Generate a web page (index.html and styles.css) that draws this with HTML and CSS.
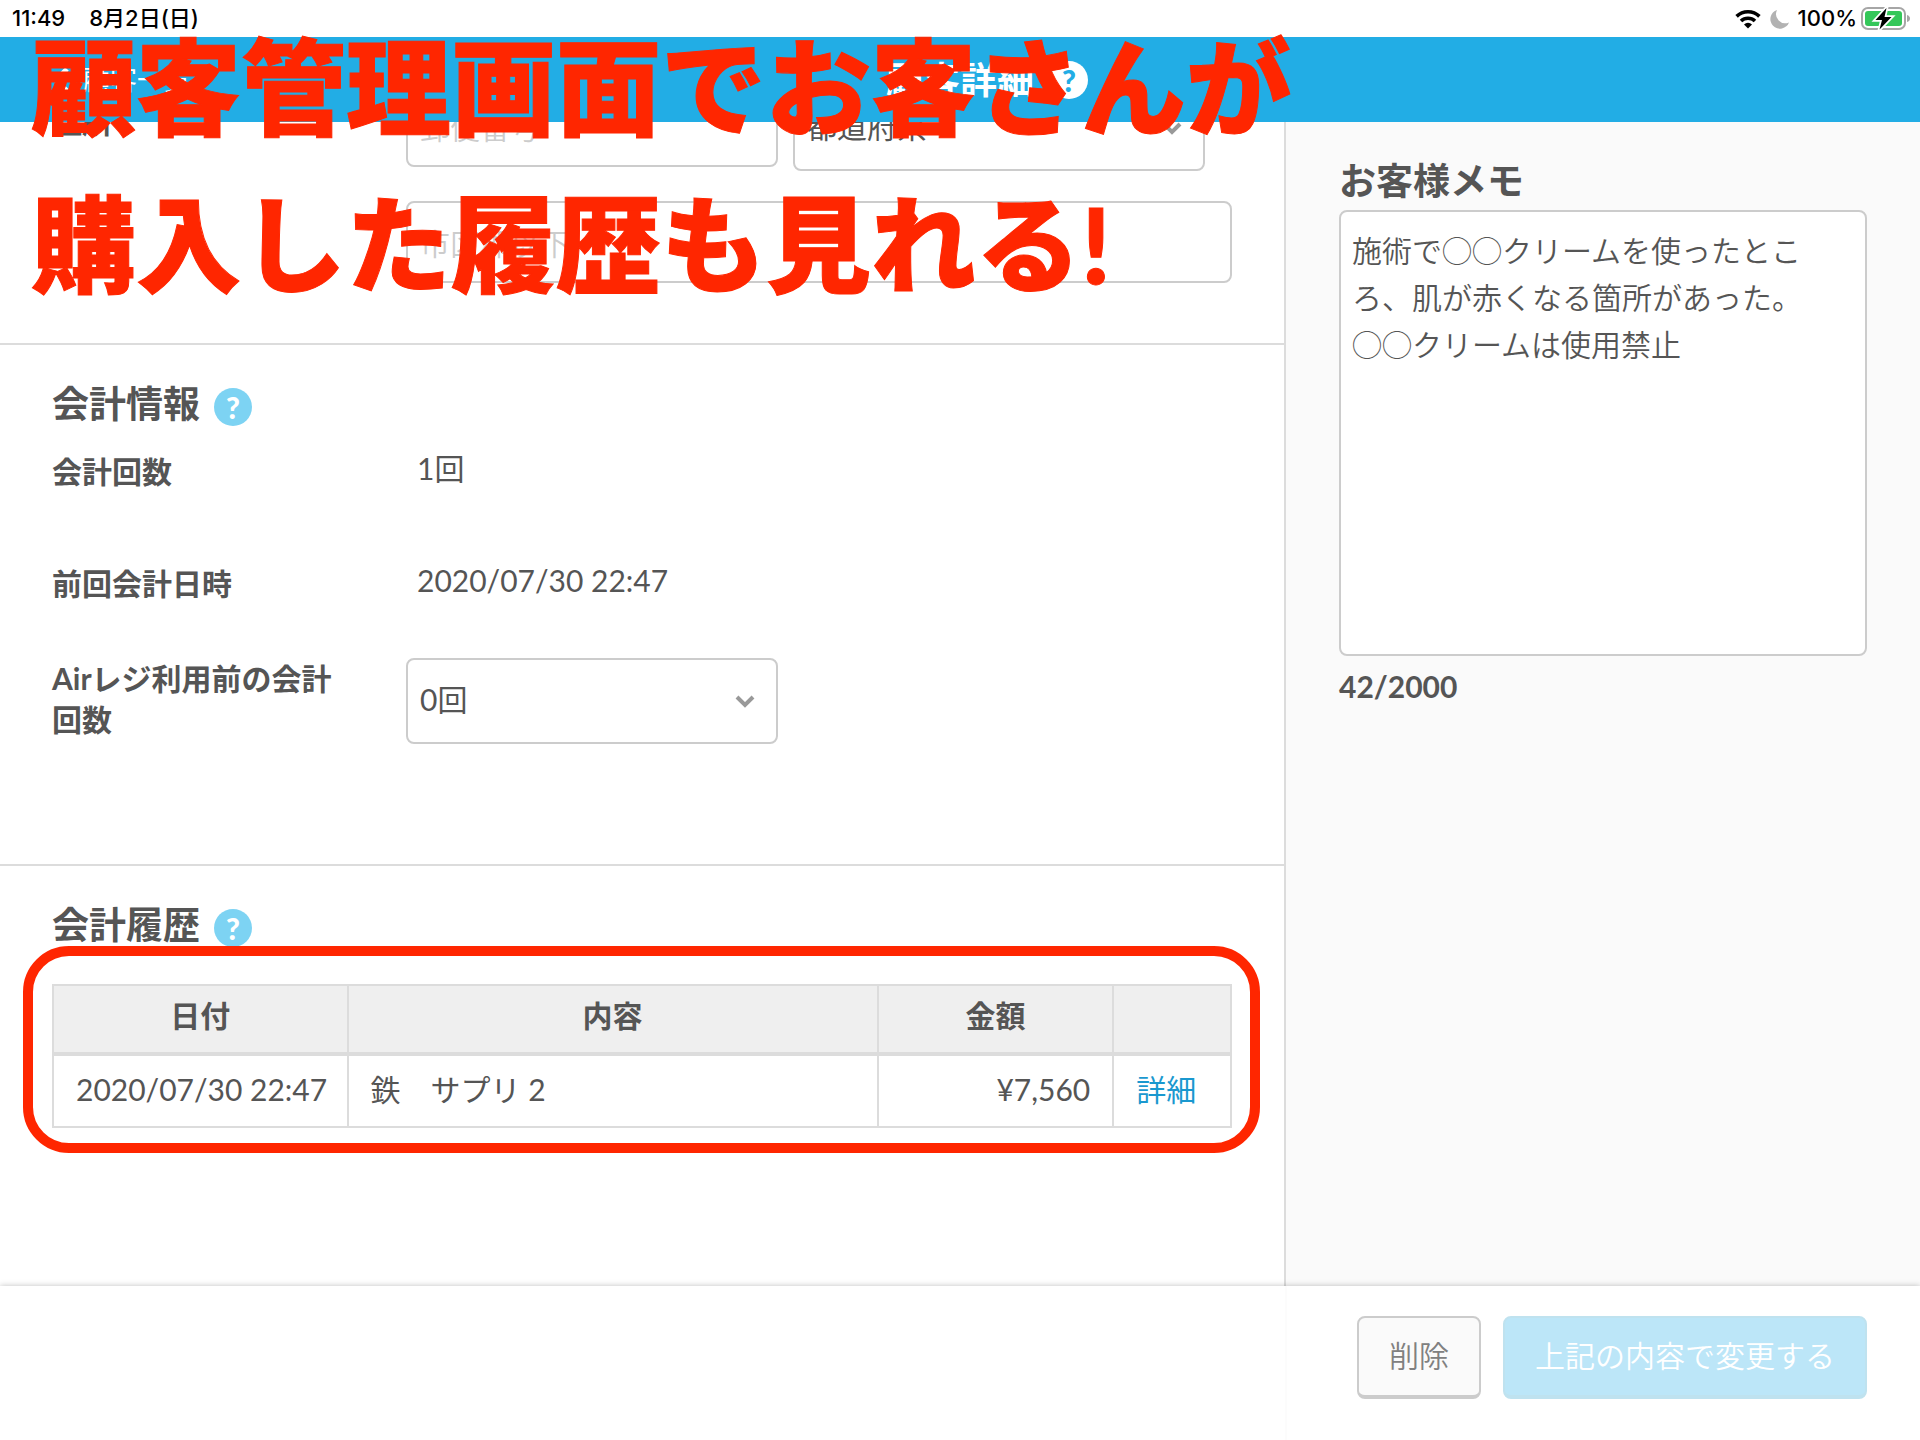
FILE: index.html
```html
<!DOCTYPE html>
<html lang="ja">
<head>
<meta charset="utf-8">
<meta name="viewport" content="width=device-width, initial-scale=1">
<title>顧客詳細</title>
<link rel="stylesheet" href="styles.css">
</head>
<body>
<div class="status-bar">
  <div class="status-group status-left"><span>11:49</span><span>8月2日(日)</span></div>
  <div class="status-group">
    <svg class="wifi" viewBox="0 0 26 20" aria-hidden="true">
      <g fill="none" stroke="#000" stroke-width="3.6">
        <path d="M1.6 7.4a16.3 16.3 0 0 1 22.8 0"/>
        <path d="M6 12a10.2 10.2 0 0 1 14 0"/>
      </g>
      <path d="M13 19.5l-4-4.1a5.9 5.9 0 0 1 8 0z"/>
    </svg>
    <svg class="moon" viewBox="0 0 20 20" aria-hidden="true"><path fill="#b2b2b2" d="M7 1A9.6 9.6 0 1 0 19 13.400A9.200 9.200 0 0 1 7 1z"/></svg>
    <span class="battery-level">100%</span>
    <svg class="battery" viewBox="0 0 50 24" aria-hidden="true">
      <rect x="1" y="1" width="43" height="21" rx="6" fill="#fff" stroke="#a6a6a6" stroke-width="2"/>
      <rect x="4" y="4" width="37" height="15" rx="3" fill="#34c759"/>
      <path d="M46 8v7q3-1 3-3.500T46 8z" fill="#a6a6a6"/>
      <path d="M25.500 1L14.500 13h6.500L18.500 22.500 30.500 10h-7z" fill="#000" stroke="#fff" stroke-width="3.500" paint-order="stroke"/>
    </svg>
  </div>
</div>

<header class="app-header">
  <a class="back" href="#">
    <svg viewBox="0 0 18 28" aria-hidden="true"><path d="M15 3L4 14l11 11" fill="none" stroke="#fff" stroke-width="5"/></svg>
    顧客一覧
  </a>
  <h1 class="app-title">顧客詳細</h1>
  <button class="help help-light" type="button" aria-label="ヘルプ">?</button>
</header>

<main class="content">
  <div class="form-pane">
    <section class="section address">
      <div class="row">
        <label class="row-label" for="zip">住所</label>
        <div class="address-fields">
          <input class="field zip" id="zip" type="text" placeholder="郵便番号">
          <div class="select-wrap">
            <select class="field select" aria-label="都道府県"><option>都道府県</option></select>
            <svg class="chevron" viewBox="0 0 20 14" aria-hidden="true"><path d="M2 2l8 8 8-8" fill="none" stroke="#999" stroke-width="4"/></svg>
          </div>
          <input class="field street" type="text" placeholder="市区郡以下" aria-label="市区郡以下">
        </div>
      </div>
    </section>

    <section class="section">
      <h2 class="heading">会計情報 <button class="help" type="button" aria-label="会計情報のヘルプ">?</button></h2>
      <div class="rows">
        <div class="row row-text">
          <div class="row-label">会計回数</div>
          <div class="row-value">1回</div>
        </div>
        <div class="row row-text row-last-text">
          <div class="row-label">前回会計日時</div>
          <div class="row-value">2020/07/30 22:47</div>
        </div>
        <div class="row">
          <label class="row-label" for="before">Airレジ利用前の会計回数</label>
          <div class="select-wrap count-select">
            <select class="field select" id="before"><option>0回</option></select>
            <svg class="chevron" viewBox="0 0 20 14" aria-hidden="true"><path d="M2 2l8 8 8-8" fill="none" stroke="#999" stroke-width="4"/></svg>
          </div>
        </div>
      </div>
    </section>

    <section class="section history">
      <h2 class="heading">会計履歴 <button class="help" type="button" aria-label="会計履歴のヘルプ">?</button></h2>
      <div class="history-wrap">
        <table class="history-table">
          <colgroup><col class="col-date"><col class="col-body"><col class="col-price"><col class="col-link"></colgroup>
          <thead><tr><th>日付</th><th>内容</th><th>金額</th><th></th></tr></thead>
          <tbody><tr><td>2020/07/30 22:47</td><td>鉄　サプリ 2</td><td class="price">¥7,560</td><td><a href="#">詳細</a></td></tr></tbody>
        </table>
        <div class="callout"></div>
      </div>
    </section>
  </div>

  <aside class="memo-pane">
    <h2 class="heading"><label for="memo">お客様メモ</label></h2>
    <textarea class="memo" id="memo">施術で◯◯クリームを使ったところ、肌が赤くなる箇所があった。
◯◯クリームは使用禁止</textarea>
    <p class="memo-count">42/2000</p>
  </aside>
</main>

<footer class="footer">
  <div class="actions">
    <button class="button button-delete" type="button">削除</button>
    <button class="button button-submit" type="button">上記の内容で変更する</button>
  </div>
</footer>

<p class="caption">顧客管理画面でお客さんが<br>購入した履歴も見れる!</p>
</body>
</html>
```
FILE: styles.css
```css
* {
  box-sizing: border-box;
}

body {
  position: relative;
  display: flex;
  flex-direction: column;
  height: 100vh;
  margin: 0;
  overflow: hidden;
  background: #fff;
  color: #555;
  font-family: Lato, "Noto Sans CJK JP", sans-serif;
  font-size: 30px;
  font-weight: 350;
  line-height: 41px;
}

button,
input,
select,
textarea {
  margin: 0;
  color: inherit;
  font: inherit;
}

h1,
h2,
p {
  margin: 0;
}

/* Status bar */
.status-bar {
  display: flex;
  flex: none;
  justify-content: space-between;
  height: 37px;
  padding: 0 9px 0 12px;
  color: #000;
  font-family: Inter, "Noto Sans CJK JP", sans-serif;
  font-size: 22px;
  font-weight: 500;
  line-height: 37px;
}

.status-group {
  display: flex;
  align-items: center;
}

.status-left {
  gap: 24px;
}

.wifi {
  width: 26px;
  height: 20px;
  margin-right: 9px;
}

.moon {
  width: 20px;
  height: 20px;
  margin-right: 8px;
}

.battery-level {
  margin-right: 4px;
}

.battery {
  width: 50px;
  height: 24px;
}

/* Header */
.app-header {
  display: grid;
  flex: none;
  grid-template-columns: 1fr auto 1fr;
  align-items: center;
  gap: 16px;
  height: 85px;
  padding: 0 52px;
  background: #22ade5;
  color: #fff;
}

.back {
  display: flex;
  align-items: center;
  gap: 13px;
  color: inherit;
  font-size: 27px;
  font-weight: 400;
  text-decoration: none;
}

.back svg {
  width: 18px;
  height: 28px;
}

.app-title {
  font-size: 37px;
  line-height: 56px;
}

.help {
  flex: none;
  width: 38px;
  height: 38px;
  padding: 0;
  border: 0;
  border-radius: 50%;
  background: #7dd3f3;
  color: #fff;
  font-size: 30px;
  font-weight: 900;
  line-height: 38px;
  text-align: center;
}

.help-light {
  background: #fff;
  color: #22ade5;
}

/* Panes */
.content {
  display: grid;
  flex: 1;
  grid-template-columns: 1fr 634px;
  min-height: 0;
}

.form-pane {
  overflow: hidden;
  border-right: 2px solid #dcdcdc;
}

.section {
  padding: 31px 52px 120px;
  border-bottom: 2px solid #dcdcdc;
}

.address {
  margin-top: -37px;
  padding-top: 0;
  padding-bottom: 60px;
}

.history {
  border-bottom: 0;
}

.heading {
  display: flex;
  align-items: center;
  gap: 14px;
  font-size: 37px;
  line-height: 56px;
}

.heading .help {
  margin-top: 6px;
}

.rows {
  padding-top: 16px;
}

.row {
  display: grid;
  grid-template-columns: 354px 1fr;
  align-items: start;
}

.row-text {
  min-height: 112px;
}

.row-last-text {
  min-height: 98px;
}

.row-label {
  padding-right: 66px;
  font-weight: 700;
}

.row-text .row-label {
  padding-top: 3px;
}

.address .row-label {
  padding-top: 16px;
}

.row-value {
  padding-left: 11px;
  font-weight: 400;
}

/* Fields */
.address-fields {
  display: grid;
  grid-template-columns: 372px 412px 1fr;
  align-items: start;
  gap: 30px 15px;
}

.field {
  display: block;
  width: 100%;
  height: 82px;
  padding: 2px 12px 0;
  border: 2px solid #ccc;
  border-radius: 8px;
  background: #fff;
}

.field::placeholder {
  color: #ccc;
}

.street {
  grid-column: 1 / -1;
}

.select-wrap {
  position: relative;
}

.count-select {
  width: 372px;
}

.select {
  height: 86px;
  padding-top: 0;
  padding-bottom: 4px;
  font-weight: 400;
  appearance: none;
}

.chevron {
  position: absolute;
  top: 37px;
  right: 23px;
  width: 20px;
  height: 14px;
}

/* History table */
.history-wrap {
  position: relative;
  margin-top: 31px;
}

.history-table {
  width: 100%;
  border-collapse: collapse;
  table-layout: fixed;
}

.col-date {
  width: 25%;
}

.col-body {
  width: 45%;
}

.col-price {
  width: 20%;
}

.col-link {
  width: 10%;
}

.history-table th,
.history-table td {
  height: 73px;
  padding: 0 22px 4px;
  border: 2px solid #dcdcdc;
  font-weight: 400;
  text-align: left;
  white-space: nowrap;
}

.history-table th {
  height: 69px;
  padding-bottom: 8px;
  border-bottom-width: 4px;
  background: #efefef;
  font-weight: 700;
  text-align: center;
}

.history-table .price {
  text-align: right;
}

.history-table a {
  color: #1a98cf;
  text-decoration: none;
}

.callout {
  position: absolute;
  inset: -38px -28px -25px -29px;
  border: 10px solid #ff2600;
  border-radius: 46px;
  pointer-events: none;
}

/* Memo */
.memo-pane {
  padding: 31px 53px;
  background: #fafafa;
}

.memo {
  display: block;
  width: 100%;
  height: 446px;
  margin-top: 1px;
  padding: 15px 11px;
  border: 2px solid #ccc;
  border-radius: 8px;
  background: #fff;
  line-height: 47px;
  resize: none;
}

.memo-count {
  margin-top: 10px;
  font-weight: 700;
}

/* Footer */
.footer {
  z-index: 1;
  display: flex;
  flex: none;
  justify-content: flex-end;
  background: #fff;
  box-shadow: 0 0 6px rgba(0, 0, 0, 0.25);
}

.actions {
  display: flex;
  justify-content: flex-end;
  gap: 22px;
  width: 635px;
  padding: 30px 53px 41px 0;
  border-left: 2px solid #fcfcfc;
}

.button {
  height: 83px;
  padding: 0 30px 2px;
  border: 2px solid #ccc;
  border-bottom-width: 4px;
  border-radius: 8px;
  background: #fafafa;
  color: #808080;
}

.button-submit {
  border-color: #bfe2ef;
  background: #bce6f8;
  color: #fff;
}

/* Caption over the screen */
.caption {
  position: absolute;
  top: 8px;
  left: 31px;
  z-index: 2;
  color: #ff2600;
  font-size: 105px;
  font-weight: 900;
  line-height: 157px;
  white-space: nowrap;
  pointer-events: none;
  -webkit-text-stroke: 1px #ff2600;
}
```
